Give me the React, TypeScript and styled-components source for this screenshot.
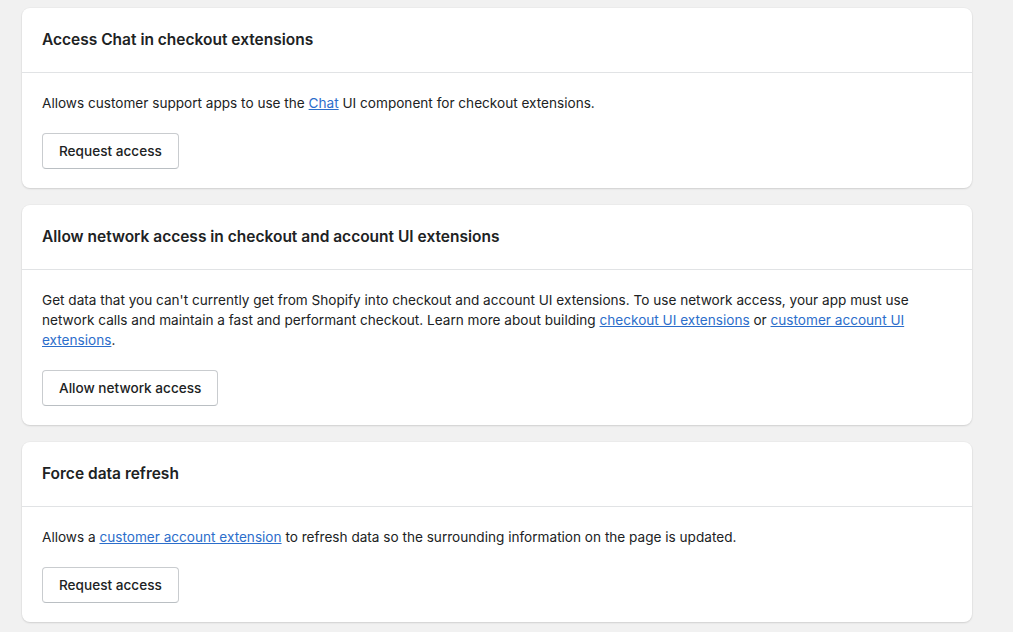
import React from "react";
import styled, { createGlobalStyle } from "styled-components";

const Global = createGlobalStyle`
  html, body { margin: 0; padding: 0; background: #f1f1f1; }
  body { font-family: Inter, "Noto Sans", "Liberation Sans", sans-serif; color: #202223; -webkit-font-smoothing: antialiased; }
`;

const Page = styled.div`
  padding: 8px 41px 10px 22px;
  display: flex;
  flex-direction: column;
  gap: 17px;
`;

const Card = styled.section`
  background: #ffffff;
  border-radius: 8px;
  box-shadow: 0 1px 2px rgba(0, 0, 0, 0.12), 0 0 0 1px rgba(0, 0, 0, 0.02);
  overflow: hidden;
`;

const Header = styled.div`
  padding: 20px;
  border-bottom: 1px solid #e1e3e5;
`;

const Title = styled.h2`
  margin: 0;
  font-size: 15.5px;
  line-height: 24px;
  font-weight: 600;
  color: #202223;
`;

const Body = styled.div`
  padding: 20px 20px 19px;
  display: flex;
  flex-direction: column;
  align-items: flex-start;
  gap: 20px;
`;

const Text = styled.p`
  margin: 0;
  font-size: 13.6px;
  line-height: 20px;
  color: #202223;
`;

const Link = styled.a`
  color: #2c6ecb;
  text-decoration: underline;
  cursor: pointer;
`;

const Button = styled.button`
  font-family: inherit;
  font-size: 13.6px;
  line-height: 20px;
  font-weight: 450;
  color: #202223;
  background: #ffffff;
  border: 1px solid #c9cccf;
  border-bottom-color: #babfc3;
  border-radius: 4px;
  padding: 7px 16px;
  min-height: 36px;
  cursor: pointer;
`;

export default function App() {
  return (
    <>
      <Global />
      <Page>
        <Card>
          <Header>
            <Title>Access Chat in checkout extensions</Title>
          </Header>
          <Body>
            <Text>
              Allows customer support apps to use the <Link>Chat</Link> UI component for checkout extensions.
            </Text>
            <Button>Request access</Button>
          </Body>
        </Card>
        <Card>
          <Header>
            <Title>Allow network access in checkout and account UI extensions</Title>
          </Header>
          <Body>
            <Text>
              Get data that you can't currently get from Shopify into checkout and account UI extensions. To use network
              access, your app must use network calls and maintain a fast and performant checkout. Learn more about
              building <Link>checkout UI extensions</Link> or <Link>customer account UI extensions</Link>.
            </Text>
            <Button>Allow network access</Button>
          </Body>
        </Card>
        <Card>
          <Header>
            <Title>Force data refresh</Title>
          </Header>
          <Body>
            <Text>
              Allows a <Link>customer account extension</Link> to refresh data so the surrounding information on the page
              is updated.
            </Text>
            <Button>Request access</Button>
          </Body>
        </Card>
      </Page>
    </>
  );
}
